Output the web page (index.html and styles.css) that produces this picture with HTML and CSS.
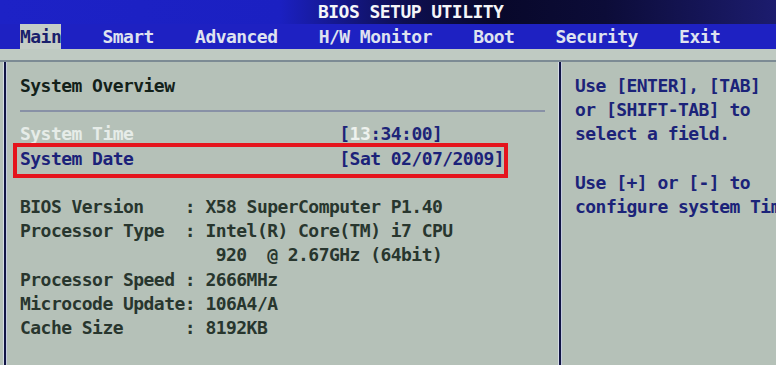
FILE: index.html
```html
<!DOCTYPE html>
<html lang="en">
<head>
<meta charset="utf-8">
<title>BIOS SETUP UTILITY</title>
<link rel="stylesheet" href="styles.css">
</head>
<body>
<div class="screen">
  <header class="titlebar"><span class="title">BIOS SETUP UTILITY</span></header>
  <nav class="menubar">
    <span class="tab active">Main</span>
    <span class="tab">Smart</span>
    <span class="tab">Advanced</span>
    <span class="tab">H/W Monitor</span>
    <span class="tab">Boot</span>
    <span class="tab">Security</span>
    <span class="tab">Exit</span>
  </nav>
  <div class="band"></div>
  <main class="main">
    <section class="left">
      <div class="row heading">System Overview</div>
      <div class="row rule-row"><div class="rule"></div></div>
      <div class="field time"><span class="label">System Time</span><span class="value">[<span class="hl">13</span>:34:00]</span></div>
      <div class="field date"><span class="label">System Date</span><span class="value">[Sat 02/07/2009]</span><span class="mark"></span></div>
      <div class="row"></div>
      <div class="info">
        <span class="k">BIOS Version</span><span class="c">:</span><span class="v">X58 SuperComputer P1.40</span>
        <span class="k">Processor Type</span><span class="c">:</span><span class="v">Intel(R) Core(TM) i7 CPU
 920  @ 2.67GHz (64bit)</span>
        <span class="k">Processor Speed</span><span class="c">:</span><span class="v">2666MHz</span>
        <span class="k">Microcode Update</span><span class="c">:</span><span class="v">106A4/A</span>
        <span class="k">Cache Size</span><span class="c">:</span><span class="v">8192KB</span>
      </div>
    </section>
    <aside class="right">
      <p class="help">Use [ENTER], [TAB]
or [SHIFT-TAB] to
select a field.

Use [+] or [-] to
configure system Time.</p>
    </aside>
  </main>
</div>
</body>
</html>
```
FILE: styles.css
```css
html, body {
  margin: 0;
  padding: 0;
}

body {
  width: 776px;
  height: 365px;
  overflow: hidden;
  background: #b5c1b8;
  font-family: "DejaVu Sans Mono", "Liberation Mono", monospace;
  font-weight: bold;
  font-size: 18px;
  letter-spacing: -0.54px;
}

.screen {
  width: 776px;
  height: 365px;
  display: flex;
  flex-direction: column;
}

.titlebar {
  height: 24px;
  line-height: 24px;
  padding-left: 318px;
  color: #f4f5f8;
  background: linear-gradient(90deg, #1d22c6 0%, #1b20c2 36%, #0e0f52 52%, #08082a 64%, #0c0c38 78%, #1c1c6e 100%);
}

.menubar {
  display: flex;
  gap: 41.2px;
  height: 25px;
  line-height: 25px;
  padding-left: 20px;
  background: #1e21c2;
  color: #dfe2ef;
}

.tab.active {
  background: #c5cdc7;
  color: #1a1f6c;
}

.band {
  height: 11px;
  background: #bfcac2;
}

.main {
  flex: 1;
  display: flex;
  border-top: 2px solid #7c8b94;
  min-height: 0;
}

.left {
  flex: 0 0 555px;
  box-sizing: border-box;
  margin-left: 4px;
  padding: 12px 14px 0 14px;
  border-left: 2px solid #111545;
  box-shadow: -1px 0 0 #d6dde6, inset 1px 0 0 #c4cce0;
  line-height: 24.2px;
}

.row {
  height: 24.2px;
}

.heading {
  color: #13211a;
}

.rule-row {
  display: flex;
  align-items: center;
}

.rule {
  width: 100%;
  height: 2px;
  background: #8891a6;
  margin-top: 1px;
}

.field {
  display: grid;
  grid-template-columns: 319.3px auto;
  height: 24.2px;
}

.time .label {
  color: #e6ece8;
}

.time .value {
  color: #1c2478;
}

.hl {
  color: #eef2ee;
}

.date {
  position: relative;
  color: #1b2279;
}

.mark {
  position: absolute;
  left: -7px;
  top: -4px;
  width: 495px;
  height: 35px;
  box-sizing: border-box;
  border: 4px solid #e5141d;
}

.info {
  display: grid;
  grid-template-columns: 164.8px 20.6px auto;
  color: #28362e;
}

.info .v {
  white-space: pre;
}

.right {
  flex: 1;
  min-width: 0;
  overflow: hidden;
  border-left: 2px solid #111545;
  box-shadow: -1px 0 0 #d6dde6, inset 1px 0 0 #c4cce0;
  padding: 12px 0 0 14px;
}

.help {
  margin: 0;
  white-space: pre;
  line-height: 24.2px;
  color: #1b2379;
}
```
